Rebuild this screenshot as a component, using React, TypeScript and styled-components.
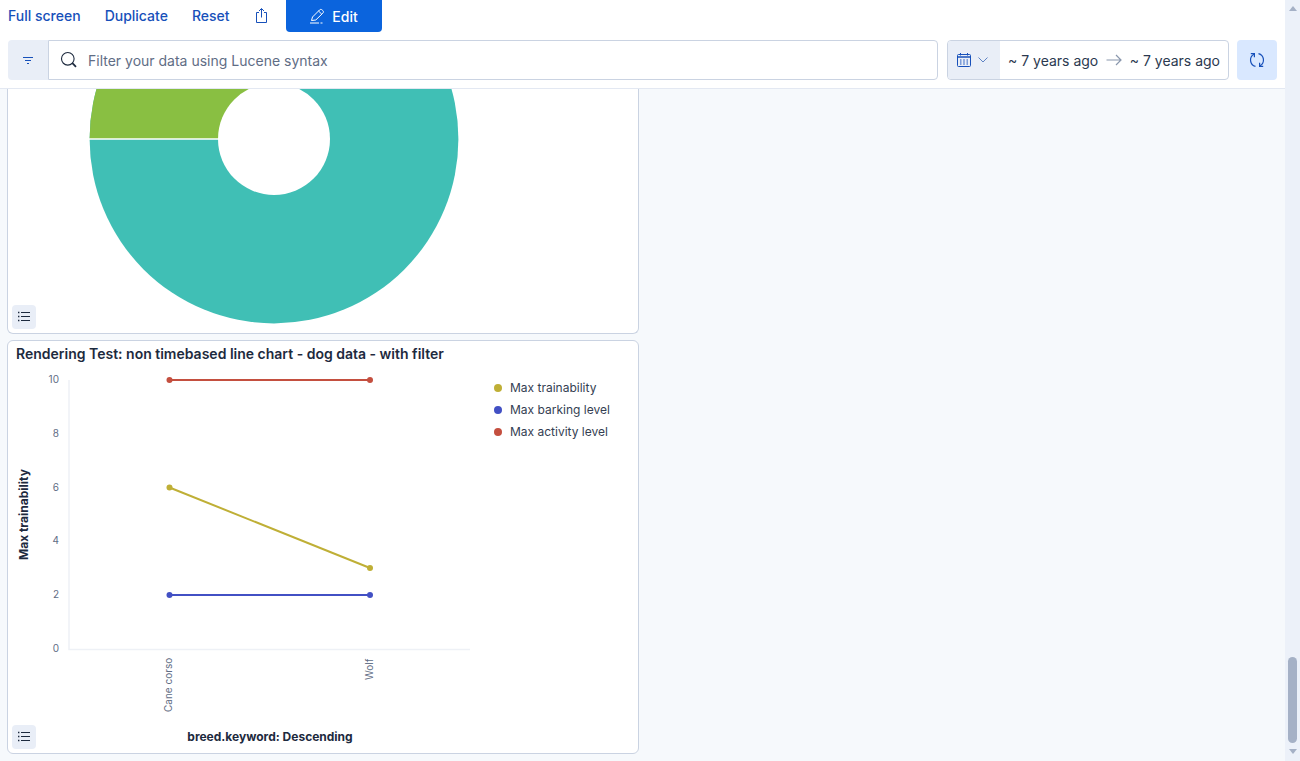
import React from 'react';
import styled, { createGlobalStyle } from 'styled-components';

const GlobalStyle = createGlobalStyle`
  html, body {
    margin: 0;
    padding: 0;
    height: 100%;
    overflow: hidden;
    background: #f6f9fc;
    font-family: Inter, "Liberation Sans", sans-serif;
    color: #1d2a3e;
  }
`;

const Page = styled.div`
  display: flex;
  width: 100%;
  height: 100vh;
`;

const Content = styled.div`
  flex: 1;
  min-width: 0;
  display: flex;
  flex-direction: column;
`;

const Header = styled.header`
  height: 88px;
  flex-shrink: 0;
  background: #fff;
  border-bottom: 1px solid #e3e8f2;
  display: flex;
  flex-direction: column;
  gap: 8px;
`;

const TopMenu = styled.nav`
  height: 32px;
  display: flex;
  align-items: center;
  padding-left: 8px;
`;

const MenuLink = styled.a`
  font-size: 14px;
  font-weight: 500;
  color: #1750ba;
  margin-right: 24px;
  line-height: 32px;
`;

const ShareButton = styled.span`
  display: flex;
  color: #1750ba;
  margin-right: 16px;
  width: 16px;
  justify-content: center;
`;

const EditButton = styled.button`
  width: 96px;
  height: 32px;
  border: none;
  border-radius: 0 0 4px 4px;
  background: #0b64dd;
  color: #fff;
  font: 500 14px Inter, "Liberation Sans", sans-serif;
  display: flex;
  align-items: center;
  justify-content: center;
  gap: 7px;
  padding: 0;
`;

const QueryBar = styled.div`
  height: 40px;
  display: flex;
  padding: 0 8px;
`;

const FilterButton = styled.div`
  width: 40px;
  box-sizing: border-box;
  background: #e9eef7;
  border-radius: 4px 0 0 4px;
  display: flex;
  align-items: center;
  justify-content: center;
  color: #1750ba;
`;

const SearchBox = styled.div`
  flex: 1;
  box-sizing: border-box;
  background: #fff;
  border: 1px solid #cad3e2;
  border-radius: 0 4px 4px 0;
  display: flex;
  align-items: center;
  gap: 10px;
  padding-left: 11px;
  font-size: 14px;
  color: #5f6d85;
`;

const DatePicker = styled.div`
  width: 282px;
  box-sizing: border-box;
  margin-left: 9px;
  background: #fff;
  border: 1px solid #cad3e2;
  border-radius: 4px;
  display: flex;
  align-items: stretch;
  overflow: hidden;
`;

const CalendarToggle = styled.div`
  width: 52px;
  flex-shrink: 0;
  background: #e9eef7;
  display: flex;
  align-items: center;
  padding-left: 8px;
  box-sizing: border-box;
  gap: 6px;
  color: #1750ba;
`;

const DateRange = styled.div`
  flex: 1;
  display: flex;
  align-items: center;
  justify-content: space-between;
  padding: 0 8px;
  font-size: 14px;
  color: #2b394f;
  white-space: nowrap;
`;

const ArrowIcon = styled.span`
  display: flex;
  color: #8a97ad;
`;

const RefreshButton = styled.div`
  width: 40px;
  margin-left: 8px;
  background: #d9e8ff;
  border-radius: 4px;
  display: flex;
  align-items: center;
  justify-content: center;
  color: #1750ba;
`;

const Main = styled.main`
  flex: 1;
  min-height: 0;
  overflow: hidden;
  display: flex;
  flex-direction: column;
  gap: 6px;
  padding-left: 7px;
`;

const Panel = styled.section<{ $clipped?: boolean }>`
  position: relative;
  width: 632px;
  box-sizing: border-box;
  flex-shrink: 0;
  background: #fff;
  border: 1px solid #cad3e2;
  border-top-width: ${props => (props.$clipped ? 0 : 1)}px;
  border-radius: ${props => (props.$clipped ? '0 0 6px 6px' : '6px')};
`;

const PanelTitle = styled.h2`
  margin: 0;
  padding: 4px 8px 0;
  height: 28px;
  box-sizing: border-box;
  font-size: 14px;
  line-height: 17px;
  font-weight: 600;
  color: #1d2a3e;
`;

const ChartRow = styled.div`
  display: flex;
  align-items: flex-start;
`;

const ChartSvg = styled.svg`
  display: block;
  flex-shrink: 0;
`;

const Legend = styled.ul`
  list-style: none;
  margin: 0;
  padding: 11px 0 0 16px;
  display: flex;
  flex-direction: column;
  gap: 7px;
`;

const LegendItem = styled.li`
  display: flex;
  align-items: center;
  gap: 8px;
  height: 15px;
  font-size: 12px;
  color: #343e52;
  white-space: nowrap;
`;

const LegendDot = styled.span<{ $color: string }>`
  width: 8px;
  height: 8px;
  border-radius: 50%;
  background: ${props => props.$color};
`;

const LegendToggle = styled.div`
  position: absolute;
  left: 4px;
  bottom: 4px;
  width: 24px;
  height: 24px;
  border-radius: 4px;
  background: #e9eef7;
  display: flex;
  align-items: center;
  justify-content: center;
  color: #1d2a3e;
`;

const ScrollBar = styled.div`
  width: 15px;
  flex-shrink: 0;
  background: #ecf1f9;
  display: flex;
  flex-direction: column;
  align-items: center;
  box-sizing: border-box;
  padding: 6px 0 7px;
`;

const ScrollArrow = styled.span<{ $down?: boolean }>`
  width: 0;
  height: 0;
  border-left: 4.5px solid transparent;
  border-right: 4.5px solid transparent;
  border-${props => (props.$down ? 'top' : 'bottom')}: 5px solid #a5b1c6;
`;

const ScrollThumb = styled.div`
  width: 9px;
  height: 86px;
  margin-top: auto;
  margin-bottom: 6px;
  border-radius: 5px;
  background: #a5b1c6;
`;

const ShareIcon = () => (
  <svg width="16" height="16" viewBox="0 0 16 16" fill="none" stroke="currentColor">
    <path d="M5 4.5H2.5V14.5H12.5V4.5H10" />
    <path d="M7.5 9.5V0.8M5 3L7.5 0.5L10 3" />
  </svg>
);

const PencilIcon = () => (
  <svg width="16" height="16" viewBox="0 0 16 16" fill="none" stroke="currentColor">
    <path d="M2.5 12.5L3.5 9L10.5 2C11.3 1.2 12.3 1.2 13.2 2L13.8 2.6C14.6 3.4 14.6 4.4 13.8 5.2L6.8 12L2.5 12.5Z" />
    <path d="M9.5 3L12.8 6.2" />
    <path d="M1 15H10M11.5 15H13.5" />
  </svg>
);

const FilterIcon = () => (
  <svg width="16" height="16" viewBox="0 0 16 16" fill="none" stroke="currentColor">
    <path d="M3 5.5H13M5 8.5H11M7 11.5H9" />
  </svg>
);

const SearchIcon = () => (
  <svg width="18" height="18" viewBox="0 0 18 18" fill="none" stroke="#1d2a3e" strokeWidth="1.1">
    <circle cx="7.8" cy="7.8" r="6.3" />
    <path d="M12.4 12.2L16 15.8" strokeWidth="1.8" />
  </svg>
);

const CalendarIcon = () => (
  <svg width="16" height="16" viewBox="0 0 16 16" fill="none" stroke="currentColor">
    <rect x="1.5" y="2.5" width="13" height="12" rx="1" />
    <path d="M1.5 5H14.5" strokeWidth="1.5" />
    <path d="M4.5 1V3.5M11.5 1V3.5" />
    <path d="M4 8H5.5M7.2 8H8.8M10.5 8H12M4 10H5.5M7.2 10H8.8M10.5 10H12M4 12H5.5M7.2 12H8.8M10.5 12H12" />
  </svg>
);

const ChevronIcon = () => (
  <svg width="10" height="10" viewBox="0 0 10 10" fill="none" stroke="#5f83c4">
    <path d="M0.5 2.5L5 7L9.5 2.5" />
  </svg>
);

const LongArrowIcon = () => (
  <svg width="16" height="16" viewBox="0 0 16 16" fill="none" stroke="currentColor" strokeWidth="1.2">
    <path d="M0.5 8H15M10 3L15 8L10 13" />
  </svg>
);

const RefreshIcon = () => (
  <svg width="16" height="16" viewBox="0 0 16 16" fill="none" stroke="currentColor" strokeWidth="1.2">
    <path d="M6.5 14.4A6.6 6.6 0 0 1 5 2.2" />
    <path d="M1.8 1.6H5.4V5.2" />
    <path d="M9.5 1.6A6.6 6.6 0 0 1 11 13.8" />
    <path d="M14.2 14.4H10.6V10.8" />
  </svg>
);

const ListIcon = () => (
  <svg width="14" height="14" viewBox="0 0 14 14" fill="none" stroke="currentColor">
    <path d="M4 2.5H13M4 6.5H13M4 10.5H13" />
    <path d="M1 2.5H2.4M1 6.5H2.4M1 10.5H2.4" strokeWidth="1.4" />
  </svg>
);

// page coordinates: centre (274, 139), radius 184.4, hole 56
const DonutChart = () => (
  <ChartSvg width={630} height={244} viewBox="8 89 630 244">
    <circle cx="274" cy="139" r="184.4" fill="#40bfb5" />
    <path d="M89.6 139A184.4 184.4 0 0 1 274 -45.4V139Z" fill="#89bf42" />
    <path d="M89 139H220" stroke="#fff" strokeWidth="1.5" />
    <circle cx="274" cy="139" r="56" fill="#fff" />
  </ChartSvg>
);

const yTicks = [
  { label: '10', y: 380 },
  { label: '8', y: 434 },
  { label: '6', y: 488 },
  { label: '4', y: 541 },
  { label: '2', y: 595 },
  { label: '0', y: 649 },
];

const series = [
  { name: 'Max trainability', color: '#bfaf36', y1: 487.5, y2: 568 },
  { name: 'Max barking level', color: '#4250c4', y1: 595, y2: 595 },
  { name: 'Max activity level', color: '#c44f3f', y1: 380, y2: 380 },
];

const LineChart = () => (
  <ChartSvg width={470} height={384} viewBox="8 369 470 384" fontFamily="Inter, sans-serif">
    <path d="M69 380V649.5H470" fill="none" stroke="#eef1f6" strokeWidth="1.5" />
    {yTicks.map(tick => (
      <text key={tick.label} x="59" y={tick.y + 3} fontSize="10" textAnchor="end" fill="#5f6d85">
        {tick.label}
      </text>
    ))}
    {series.map(line => (
      <g key={line.name} fill={line.color} stroke={line.color}>
        <path d={`M169.5 ${line.y1}L370 ${line.y2}`} strokeWidth="2" fill="none" />
        <circle cx="169.5" cy={line.y1} r="3" stroke="none" />
        <circle cx="370" cy={line.y2} r="3" stroke="none" />
      </g>
    ))}
    <text transform="translate(172 712) rotate(-90)" fontSize="10" fill="#5f6d85">
      Cane corso
    </text>
    <text transform="translate(373 680) rotate(-90)" fontSize="10" fill="#5f6d85">
      Wolf
    </text>
    <text
      transform="translate(28 514.5) rotate(-90)"
      fontSize="12"
      fontWeight="700"
      textAnchor="middle"
      fill="#1d2a3e"
    >
      Max trainability
    </text>
    <text x="270" y="741" fontSize="12" fontWeight="700" textAnchor="middle" fill="#1d2a3e">
      breed.keyword: Descending
    </text>
  </ChartSvg>
);

const App: React.FC = () => (
  <Page>
    <GlobalStyle />
    <Content>
      <Header>
        <TopMenu>
          <MenuLink>Full screen</MenuLink>
          <MenuLink>Duplicate</MenuLink>
          <MenuLink>Reset</MenuLink>
          <ShareButton>
            <ShareIcon />
          </ShareButton>
          <EditButton>
            <PencilIcon />
            Edit
          </EditButton>
        </TopMenu>
        <QueryBar>
          <FilterButton>
            <FilterIcon />
          </FilterButton>
          <SearchBox>
            <SearchIcon />
            Filter your data using Lucene syntax
          </SearchBox>
          <DatePicker>
            <CalendarToggle>
              <CalendarIcon />
              <ChevronIcon />
            </CalendarToggle>
            <DateRange>
              <span>~ 7 years ago</span>
              <ArrowIcon>
                <LongArrowIcon />
              </ArrowIcon>
              <span>~ 7 years ago</span>
            </DateRange>
          </DatePicker>
          <RefreshButton>
            <RefreshIcon />
          </RefreshButton>
        </QueryBar>
      </Header>
      <Main>
        <Panel $clipped>
          <DonutChart />
          <LegendToggle>
            <ListIcon />
          </LegendToggle>
        </Panel>
        <Panel>
          <PanelTitle>Rendering Test: non timebased line chart - dog data - with filter</PanelTitle>
          <ChartRow>
            <LineChart />
            <Legend>
              {series.map(line => (
                <LegendItem key={line.name}>
                  <LegendDot $color={line.color} />
                  {line.name}
                </LegendItem>
              ))}
            </Legend>
          </ChartRow>
          <LegendToggle>
            <ListIcon />
          </LegendToggle>
        </Panel>
      </Main>
    </Content>
    <ScrollBar>
      <ScrollArrow />
      <ScrollThumb />
      <ScrollArrow $down />
    </ScrollBar>
  </Page>
);

export default App;
